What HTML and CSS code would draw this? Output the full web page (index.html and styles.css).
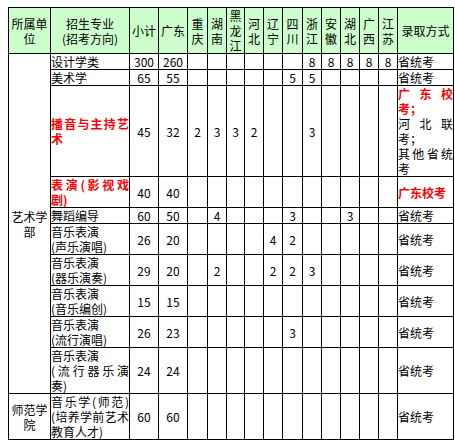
FILE: index.html
```html
<!DOCTYPE html>
<html lang="zh-CN">
<head>
<meta charset="utf-8">
<title>招生计划</title>
<link rel="stylesheet" href="styles.css">
</head>
<body>
<table class="plan">
  <colgroup>
    <col class="c-unit"><col class="c-major"><col class="c-n2"><col class="c-n2">
    <col class="c-p20"><col class="c-p19"><col class="c-p18"><col class="c-p19"><col class="c-p19">
    <col class="c-p20"><col class="c-p19"><col class="c-p19"><col class="c-p19"><col class="c-p19"><col class="c-p19">
    <col class="c-way">
  </colgroup>
  <thead>
    <tr>
      <th>所属单位</th>
      <th>招生专业<br>(招考方向)</th>
      <th>小计</th>
      <th>广东</th>
      <th>重庆</th>
      <th>湖南</th>
      <th>黑龙江</th>
      <th>河北</th>
      <th>辽宁</th>
      <th>四川</th>
      <th>浙江</th>
      <th>安徽</th>
      <th>湖北</th>
      <th>广西</th>
      <th>江苏</th>
      <th>录取方式</th>
    </tr>
  </thead>
  <tbody>
    <tr>
      <td class="unit" rowspan="10">艺术学部</td>
      <td class="major">设计学类</td>
      <td>300</td><td>260</td><td></td><td></td><td></td><td></td><td></td><td></td>
      <td>8</td><td>8</td><td>8</td><td>8</td><td>8</td>
      <td class="way">省统考</td>
    </tr>
    <tr>
      <td class="major">美术学</td>
      <td>65</td><td>55</td><td></td><td></td><td></td><td></td><td></td><td>5</td>
      <td>5</td><td></td><td></td><td></td><td></td>
      <td class="way">省统考</td>
    </tr>
    <tr>
      <td class="major red">播音与主持艺术</td>
      <td>45</td><td>32</td><td>2</td><td>3</td><td>3</td><td>2</td><td></td><td></td>
      <td>3</td><td></td><td></td><td></td><td></td>
      <td class="way"><span class="red">广东校考；</span><br>河北联考；<br>其他省统考</td>
    </tr>
    <tr>
      <td class="major red">表演(影视戏剧)</td>
      <td>40</td><td>40</td><td></td><td></td><td></td><td></td><td></td><td></td>
      <td></td><td></td><td></td><td></td><td></td>
      <td class="way red">广东校考</td>
    </tr>
    <tr>
      <td class="major">舞蹈编导</td>
      <td>60</td><td>50</td><td></td><td>4</td><td></td><td></td><td></td><td>3</td>
      <td></td><td></td><td>3</td><td></td><td></td>
      <td class="way">省统考</td>
    </tr>
    <tr>
      <td class="major">音乐表演<br>(声乐演唱)</td>
      <td>26</td><td>20</td><td></td><td></td><td></td><td></td><td>4</td><td>2</td>
      <td></td><td></td><td></td><td></td><td></td>
      <td class="way">省统考</td>
    </tr>
    <tr>
      <td class="major">音乐表演<br>(器乐演奏)</td>
      <td>29</td><td>20</td><td></td><td>2</td><td></td><td></td><td>2</td><td>2</td>
      <td>3</td><td></td><td></td><td></td><td></td>
      <td class="way">省统考</td>
    </tr>
    <tr>
      <td class="major">音乐表演<br>(音乐编创)</td>
      <td>15</td><td>15</td><td></td><td></td><td></td><td></td><td></td><td></td>
      <td></td><td></td><td></td><td></td><td></td>
      <td class="way">省统考</td>
    </tr>
    <tr>
      <td class="major">音乐表演<br>(流行演唱)</td>
      <td>26</td><td>23</td><td></td><td></td><td></td><td></td><td></td><td>3</td>
      <td></td><td></td><td></td><td></td><td></td>
      <td class="way">省统考</td>
    </tr>
    <tr>
      <td class="major">音乐表演<br>(流行器乐演奏)</td>
      <td>24</td><td>24</td><td></td><td></td><td></td><td></td><td></td><td></td>
      <td></td><td></td><td></td><td></td><td></td>
      <td class="way">省统考</td>
    </tr>
    <tr>
      <td class="unit">师范学院</td>
      <td class="major">音乐学(师范)(培养学前艺术教育人才)</td>
      <td>60</td><td>60</td><td></td><td></td><td></td><td></td><td></td><td></td>
      <td></td><td></td><td></td><td></td><td></td>
      <td class="way">省统考</td>
    </tr>
  </tbody>
</table>
</body>
</html>
```

FILE: styles.css
```css
html, body {
  background: #ffffff;
}
body {
  margin: 7px 0 0 8px;
  font-family: "Noto Sans CJK SC", "Liberation Sans", sans-serif;
  font-size: 12px;
  line-height: 15px;
  color: #000000;
}
.plan {
  border-collapse: collapse;
  table-layout: fixed;
  width: 445px;
}
.plan th,
.plan td {
  border: 1px solid #000000;
  padding: 0;
  vertical-align: middle;
  text-align: center;
  font-weight: normal;
  overflow: hidden;
}
.plan th {
  background: #ccffcc;
}
.c-unit { width: 42px; }
.c-major { width: 79px; }
.c-n2 { width: 29px; }
.c-p20 { width: 20px; }
.c-p19 { width: 19px; }
.c-p18 { width: 18px; }
.c-way { width: 56px; }
.plan td.major,
.plan td.way {
  text-align: justify;
}
.plan td.unit {
  text-align: center;
}
.plan .red,
.plan td.red {
  color: #ff0000;
  font-weight: bold;
}
```
